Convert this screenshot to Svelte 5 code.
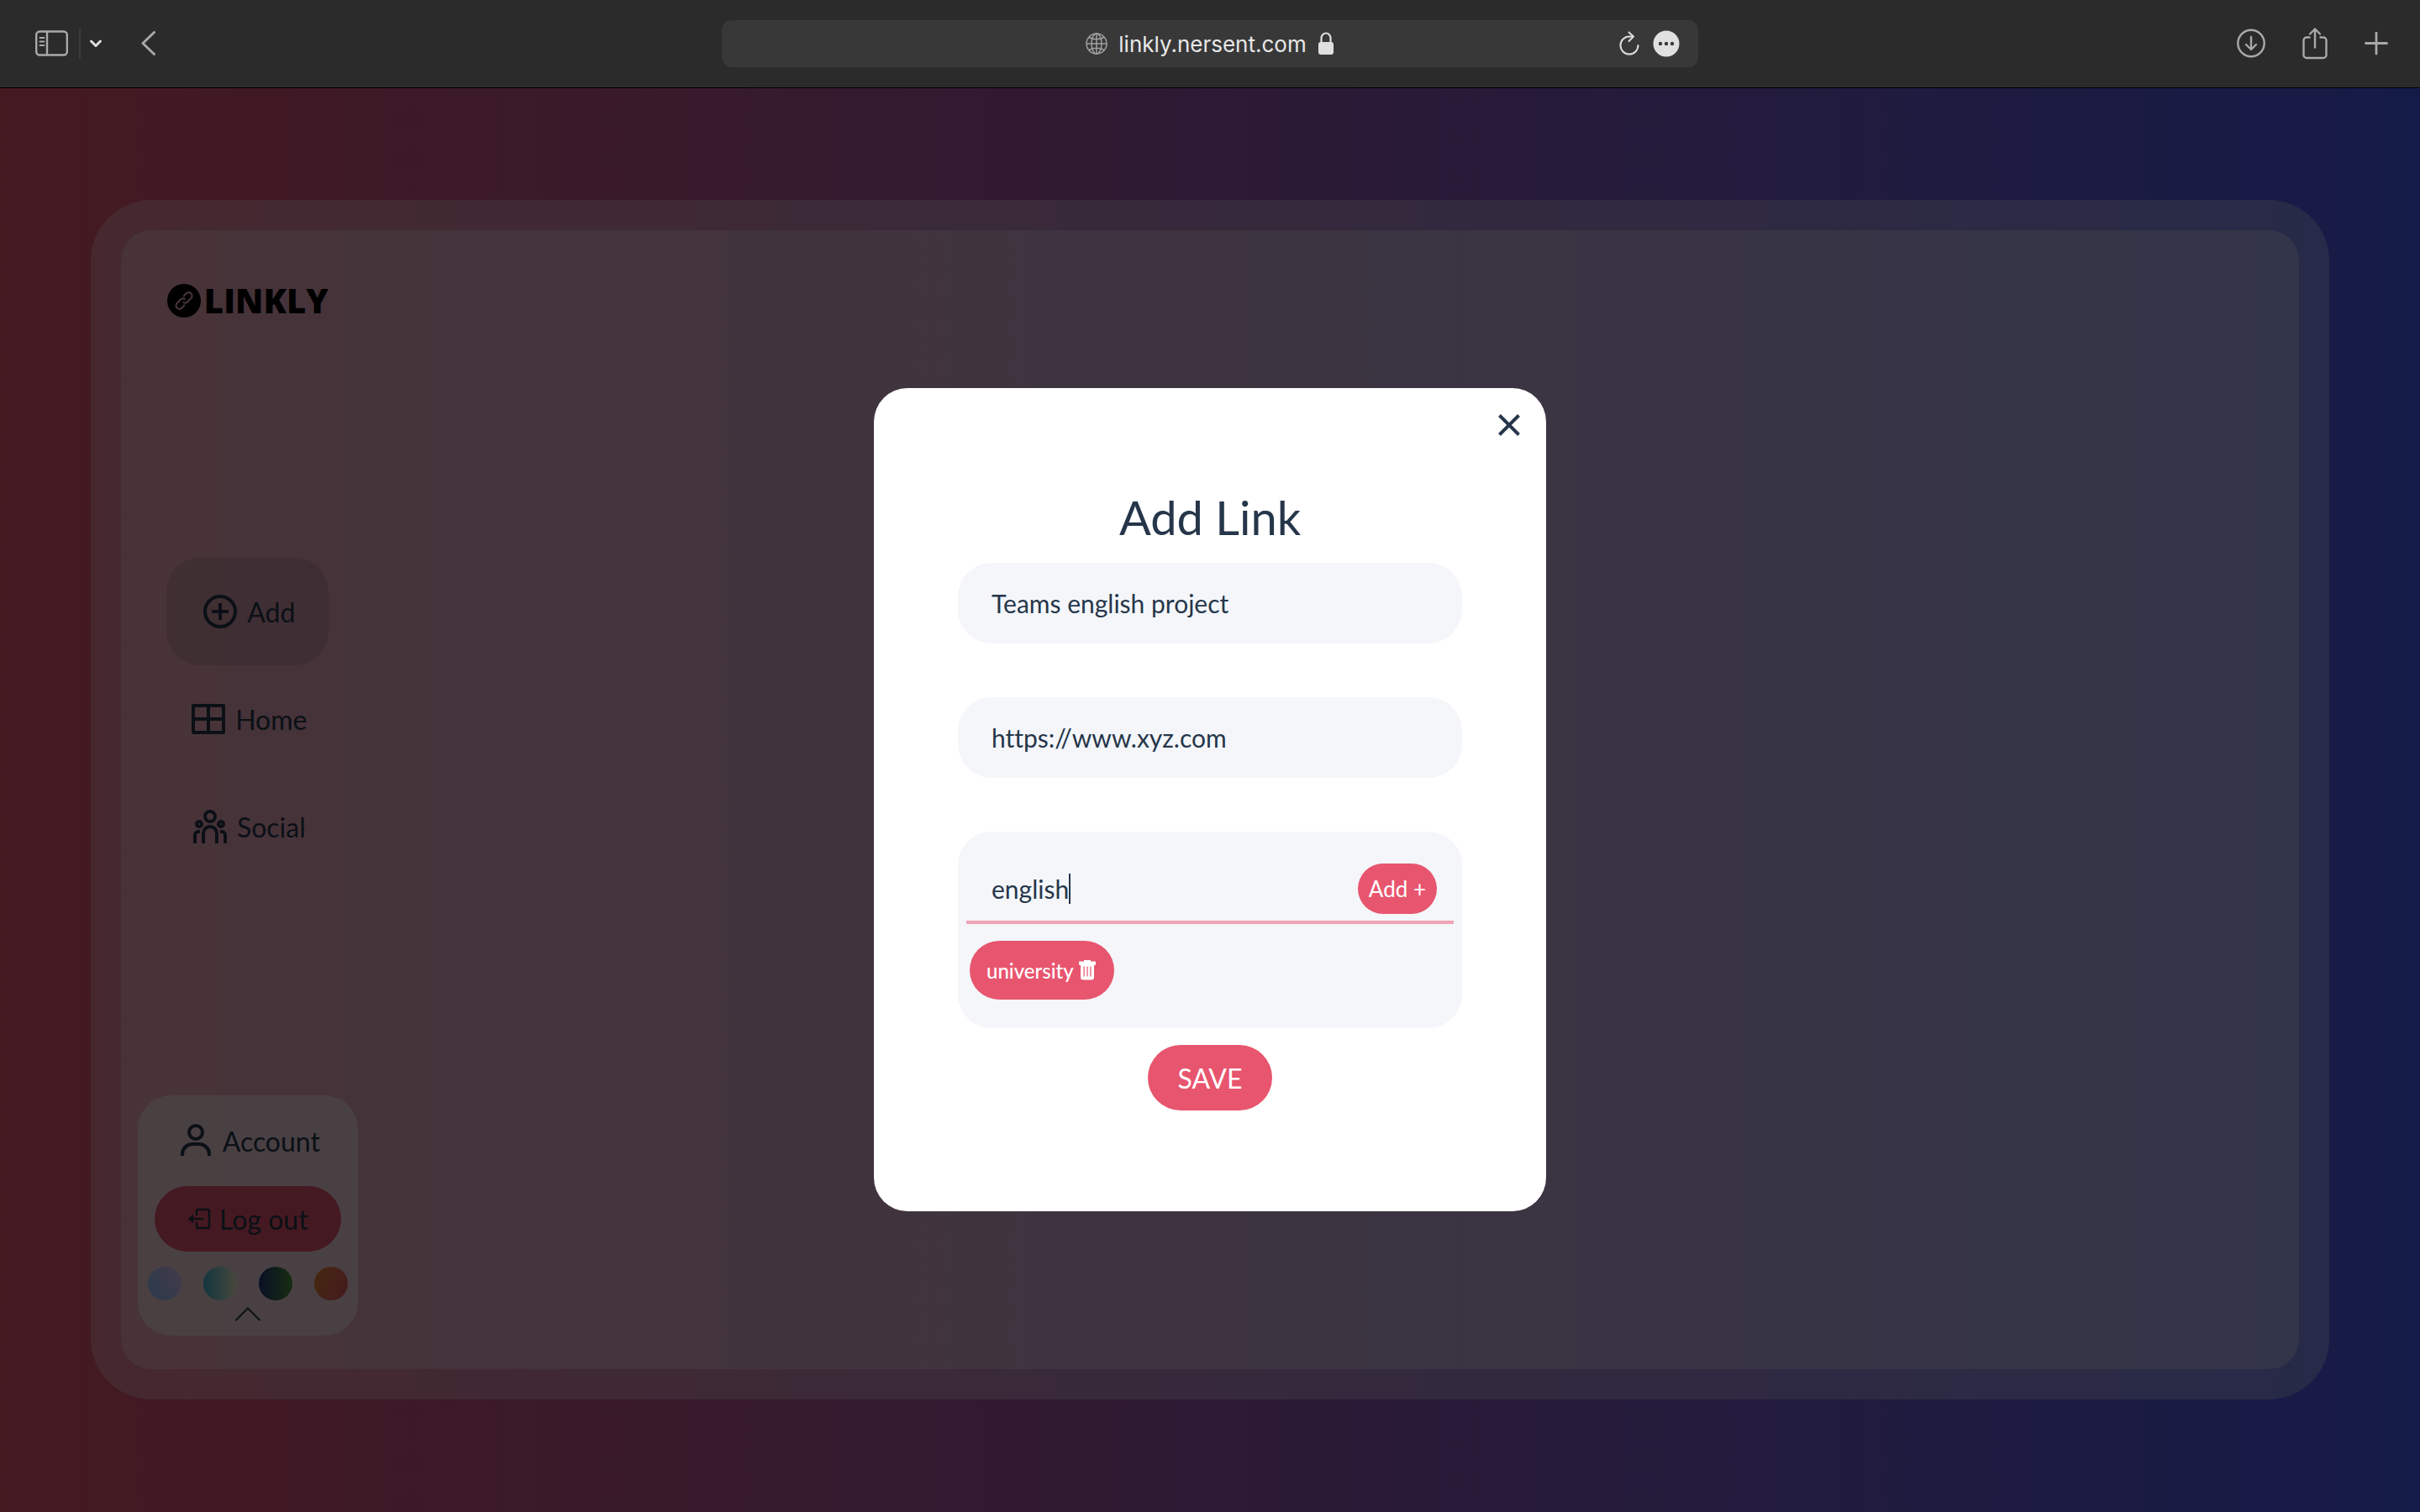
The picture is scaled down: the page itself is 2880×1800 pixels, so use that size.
<script>
  let title = $state('Teams english project');
  let url = $state('https://www.xyz.com');
  let tag = $state('english');
  let tags = $state(['university']);
  let address = $state('linkly.nersent.com');

  const themes = ['Sky', 'Lagoon', 'Forest', 'Sunset'];

  function addTag() {
    const name = tag.trim();
    if (name) tags.push(name);
    tag = '';
  }
</script>

<div class="browser">
  <header class="toolbar">
    <div class="group">
      <button class="icon-btn" aria-label="Show sidebar">
        <svg width="40" height="32" viewBox="0 0 40 32" fill="none" stroke="currentColor" stroke-width="2.4">
          <rect x="1.2" y="1.5" width="36.6" height="28" rx="4" />
          <path d="M14 1.500v28" />
          <path d="M5.500 9h5M5.500 13.500h5M5.500 18h5" stroke-width="1.800" stroke-linecap="round" />
        </svg>
      </button>
      <span class="divider"></span>
      <button class="icon-btn bright" aria-label="Tab groups">
        <svg width="16" height="12" viewBox="0 0 16 12" fill="none" stroke="currentColor" stroke-width="3" stroke-linecap="round" stroke-linejoin="round">
          <path d="M2.500 3l5.500 5.500L13.500 3" />
        </svg>
      </button>
      <button class="icon-btn back" aria-label="Back">
        <svg width="18" height="30" viewBox="0 0 18 30" fill="none" stroke="currentColor" stroke-width="3" stroke-linecap="round" stroke-linejoin="round">
          <path d="M15.500 1.500L2 14.500l13.500 13" />
        </svg>
      </button>
    </div>

    <div class="address">
      <div class="site">
        <svg width="26" height="26" viewBox="0 0 26 26" fill="none" stroke="#a0a0a0" stroke-width="1.500">
          <circle cx="13" cy="13" r="12" />
          <ellipse cx="13" cy="13" rx="6" ry="12" />
          <path d="M13 1v24M1 13h24M4 5.500c5 3 13 3 18 0M4 20.500c5-3 13-3 18 0" />
        </svg>
        <input aria-label="Address" bind:value={address} />
        <svg width="20" height="28" viewBox="0 0 20 28">
          <rect x="1" y="12" width="18" height="15" rx="3" fill="#e0e0e0" />
          <path d="M4.500 13V7.500a5.500 6 0 0 1 11 0V13" fill="none" stroke="#e0e0e0" stroke-width="2.200" />
        </svg>
      </div>
      <div class="tools">
        <button class="icon-btn bright" aria-label="Reload">
          <svg width="26" height="30" viewBox="0 0 26 30" fill="none" stroke="currentColor" stroke-width="2" stroke-linecap="round" stroke-linejoin="round">
            <path d="M23.500 17A10.500 10.500 0 1 1 13 6.500h4" />
            <path d="M12.500 1.500l5.500 5-5.500 5.500" />
          </svg>
        </button>
        <button class="icon-btn bright" aria-label="Page settings">
          <svg width="32" height="32" viewBox="0 0 32 32">
            <circle cx="16" cy="16" r="15.500" fill="#e0e0e0" />
            <g fill="#383838"><circle cx="9" cy="16" r="2.200" /><circle cx="16" cy="16" r="2.200" /><circle cx="23" cy="16" r="2.200" /></g>
          </svg>
        </button>
      </div>
    </div>

    <div class="group end">
      <button class="icon-btn" aria-label="Downloads">
        <svg width="34" height="38" viewBox="0 0 34 38" fill="none" stroke="currentColor" stroke-width="2.400" stroke-linecap="round" stroke-linejoin="round">
          <circle cx="17" cy="18.500" r="15.700" />
          <path d="M17 11V25.500M11 20l6 6 6-6" />
        </svg>
      </button>
      <button class="icon-btn" aria-label="Share">
        <svg width="30" height="38" viewBox="0 0 30 38" fill="none" stroke="currentColor" stroke-width="2.400" stroke-linecap="round" stroke-linejoin="round">
          <path d="M9.500 11.500H5A3.500 3.500 0 0 0 1.500 15v17.500A3.500 3.500 0 0 0 5 36h20a3.500 3.500 0 0 0 3.500-3.500V15a3.500 3.500 0 0 0-3.500-3.500h-4.500" stroke-linecap="butt" />
          <path d="M15 23.500V1.500M9 7.500l6-6 6 6" />
        </svg>
      </button>
      <button class="icon-btn" aria-label="New tab">
        <svg width="28" height="28" viewBox="0 0 28 28" fill="none" stroke="currentColor" stroke-width="2.800" stroke-linecap="round">
          <path d="M14 1v25M1.500 13.500h25" />
        </svg>
      </button>
    </div>
  </header>

  <main class="stage">
    <div class="frame">
      <div class="panel">
        <aside class="sidebar">
          <a class="logo" href="#home">
            <svg width="40" height="40" viewBox="0 0 40 40">
              <mask id="chain">
                <rect width="40" height="40" fill="#fff" />
                <g transform="rotate(-47 20 20)" fill="none" stroke="#000" stroke-width="2.200">
                  <path d="M17 24h-5a4 4 0 0 1 0-8h6a4 4 0 0 1 4 4" />
                  <path d="M23 16h5a4 4 0 0 1 0 8h-6a4 4 0 0 1-4-4" />
                </g>
              </mask>
              <circle cx="20" cy="20" r="20" mask="url(#chain)" />
            </svg>
            <span>LINKLY</span>
          </a>

          <nav>
            <a class="item active" href="#add">
              <svg width="48" height="48" viewBox="0 0 24 24" fill="none" stroke="currentColor" stroke-width="2">
                <circle cx="12" cy="12" r="9" />
                <path d="M12 7v10M7 12h10" />
              </svg>
              Add
            </a>
            <a class="item" href="#home">
              <svg width="48" height="48" viewBox="0 0 24 24" fill="none" stroke="currentColor" stroke-width="2" stroke-linejoin="round">
                <path d="M3 4h18v16H3zM12 4v16M3 12h18" />
              </svg>
              Home
            </a>
            <a class="item" href="#social">
              <svg width="48" height="48" viewBox="0 0 24 24" fill="none" stroke="currentColor" stroke-width="2">
                <circle cx="12" cy="6" r="3" />
                <circle cx="5.500" cy="10.500" r="1.500" />
                <circle cx="18.500" cy="10.500" r="1.500" />
                <path d="M8 22v-6a4 4 0 0 1 8 0v6M3 22v-5a2 2 0 0 1 2-2h1M21 22v-5a2 2 0 0 0-2-2h-1" />
              </svg>
              Social
            </a>
          </nav>

          <section class="account">
            <a class="profile" href="#account">
              <svg width="48" height="48" viewBox="0 0 24 24" fill="none" stroke="currentColor" stroke-width="2">
                <circle cx="12" cy="7" r="4" />
                <path d="M4 21v-1a6 6 0 0 1 6-6h4a6 6 0 0 1 6 6v1" />
              </svg>
              Account
            </a>
            <button class="logout">
              <svg width="30" height="30" viewBox="0 0 30 30" fill="none" stroke="currentColor" stroke-width="2.500">
                <path d="M11 11V5.500a1.500 1.500 0 0 1 1.500-1.500h12a1.500 1.500 0 0 1 1.500 1.500v19a1.500 1.500 0 0 1-1.500 1.500h-12a1.500 1.500 0 0 1-1.500-1.500V19M19 15H6" />
                <path d="M7 9.500v11L1 15z" fill="currentColor" stroke="none" />
              </svg>
              Log out
            </button>
            <div class="themes">
              {#each themes as name}
                <button class="theme {name.toLowerCase()}" aria-label="{name} theme"></button>
              {/each}
            </div>
            <button class="collapse" aria-label="Collapse">
              <svg width="32" height="18" viewBox="0 0 32 18" fill="none" stroke="currentColor" stroke-width="2" stroke-linecap="round">
                <path d="M2 15.500L16 1.500l14 14" />
              </svg>
            </button>
          </section>
        </aside>
      </div>
    </div>

    <div class="overlay">
      <form class="modal" onsubmit={(e) => e.preventDefault()}>
        <button type="button" class="close" aria-label="Close">
          <svg width="28" height="28" viewBox="0 0 28 28" fill="none" stroke="currentColor" stroke-width="4">
            <path d="M2.500 2.500l23 23M25.500 2.500l-23 23" />
          </svg>
        </button>
        <h1>Add Link</h1>
        <div class="fields">
          <input class="field" aria-label="Title" bind:value={title} />
          <input class="field" aria-label="Link" bind:value={url} />
          <div class="tags">
            <div class="entry">
              <input class="tag-input" aria-label="Tag" bind:value={tag} />
              <span class="caret"></span>
              <button type="button" class="add-tag" onclick={addTag}>Add +</button>
            </div>
            <div class="chips">
              {#each tags as name, i}
                <button type="button" class="chip" aria-label="Remove {name}" onclick={() => tags.splice(i, 1)}>
                  {name}
                  <svg width="20" height="24" viewBox="0 0 20 24" fill="currentColor">
                    <path d="M6 0h8v1.500h5a1 1 0 0 1 1 1V5a1 1 0 0 1-1 1H1a1 1 0 0 1-1-1V2.500a1 1 0 0 1 1-1h5z" />
                    <path fill-rule="evenodd" d="M2 5h16v15.500a3 3 0 0 1-3 3H5a3 3 0 0 1-3-3zM5.500 7.500v12h1.200v-12zM9.400 7.500v12h1.200v-12zM13.300 7.500v12h1.200v-12z" />
                  </svg>
                </button>
              {/each}
            </div>
          </div>
        </div>
        <button class="save">SAVE</button>
      </form>
    </div>
  </main>
</div>

<style>
  :global(body) {
    margin: 0;
  }
  .browser {
    display: flex;
    flex-direction: column;
    min-height: 100vh;
    font-family: Lato, sans-serif;
    font-size: 32px;
    font-variant-ligatures: none;
    color: #26364a;
  }
  button,
  input {
    margin: 0;
    padding: 0;
    border: 0;
    outline: 0;
    background: none;
    font: inherit;
    font-variant-ligatures: none;
    color: inherit;
  }
  button {
    cursor: pointer;
  }
  a {
    color: inherit;
    text-decoration: none;
  }
  svg {
    display: block;
    flex: none;
  }

  .toolbar {
    display: grid;
    grid-template-columns: 1fr minmax(0, 1162px) 1fr;
    align-items: center;
    height: 104px;
    border-bottom: 1px solid #000;
    background: #2b2b2b;
    color: #a9a9a9;
    font-family: Inter, sans-serif;
    font-size: 26px;
  }
  .group {
    display: flex;
    align-items: center;
    padding: 0 42px;
  }
  .group.end {
    justify-content: flex-end;
    gap: 44px;
    padding: 0 38px;
  }
  .bright {
    color: #dedede;
  }
  .divider {
    width: 2px;
    height: 36px;
    margin: 0 10px 0 12px;
    background: #3d3d3d;
  }
  .back {
    margin-left: 46px;
  }
  .address {
    display: grid;
    grid-template-columns: 1fr auto 1fr;
    align-items: center;
    height: 56px;
    border-radius: 12px;
    background: #383838;
  }
  .site {
    grid-column: 2;
    display: flex;
    align-items: center;
    gap: 13px;
  }
  .site input {
    field-sizing: content;
    color: #e8e8e8;
  }
  .tools {
    display: flex;
    align-items: center;
    justify-content: flex-end;
    gap: 15px;
    padding-right: 22px;
  }

  .stage {
    position: relative;
    flex: 1;
    display: flex;
    padding: 133px 108px 134px;
    background: linear-gradient(90deg, #e8556d, #475cf0);
  }
  .frame {
    flex: 1;
    display: flex;
    padding: 36px;
    border-radius: 72px;
    background: rgba(255, 255, 255, 0.3);
  }
  .panel {
    flex: 1;
    display: flex;
    padding: 40px 20px;
    border-radius: 36px;
    background: rgba(255, 255, 255, 0.3);
  }
  .sidebar {
    display: flex;
    flex-direction: column;
    align-items: center;
    justify-content: space-between;
  }
  .logo {
    display: flex;
    align-items: center;
    gap: 4px;
    height: 88px;
    padding-bottom: 6px;
    color: #000;
    font: 800 40px/54px "Open Sans", sans-serif;
  }
  nav {
    display: flex;
    flex-direction: column;
    align-items: center;
  }
  .item {
    display: flex;
    align-items: center;
    gap: 8px;
    height: 128px;
    padding: 0 40px;
    border-radius: 40px;
  }
  .item.active {
    background: rgba(0, 0, 0, 0.1);
  }
  .account {
    display: flex;
    flex-direction: column;
    align-items: center;
    padding: 30px 12px 16px;
    border-radius: 40px;
    background: rgba(255, 255, 255, 0.5);
  }
  .profile {
    display: flex;
    align-items: center;
    gap: 8px;
  }
  .logout {
    display: flex;
    align-items: center;
    gap: 8px;
    height: 78px;
    margin: 30px 8px 18px;
    padding: 0 39px;
    border-radius: 40px;
    background: #e8556e;
  }
  .themes {
    align-self: stretch;
    display: flex;
    justify-content: space-between;
  }
  .theme {
    width: 40px;
    height: 40px;
    border-radius: 50%;
  }
  .sky {
    background: linear-gradient(62deg, #8ec5fc, #e0c3fc);
  }
  .lagoon {
    background: linear-gradient(90deg, #43b5d0, #f0f2d0);
  }
  .forest {
    background: linear-gradient(90deg, #23307d, #4a9a3c);
  }
  .sunset {
    background: linear-gradient(120deg, #e88a30, #e8556e);
  }
  .collapse {
    margin-top: 8px;
  }

  .overlay {
    position: absolute;
    inset: -1px 0 0;
    display: grid;
    place-items: center;
    background: rgba(0, 0, 0, 0.7);
  }
  .modal {
    position: relative;
    box-sizing: border-box;
    display: flex;
    flex-direction: column;
    align-items: center;
    gap: 20px;
    width: 800px;
    padding: 120px 100px;
    border-radius: 40px;
    background: #fff;
  }
  .close {
    position: absolute;
    top: 30px;
    right: 30px;
  }
  h1 {
    margin: 0;
    font-size: 56px;
    line-height: 68px;
    font-weight: 400;
  }
  .fields {
    align-self: stretch;
    display: flex;
    flex-direction: column;
    gap: 64px;
    font-size: 30px;
  }
  .field {
    height: 96px;
    padding: 0 40px;
    border-radius: 40px;
    background: #f4f6fa;
  }
  .tags {
    padding: 30px 10px 34px;
    border-radius: 40px;
    background: #f4f6fa;
  }
  .entry {
    display: flex;
    align-items: center;
    height: 76px;
    padding: 0 20px 0 30px;
    border-bottom: 4px solid #f1a4b4;
  }
  .tag-input {
    field-sizing: content;
  }
  .caret {
    width: 2px;
    height: 36px;
    background: #26364a;
  }
  .add-tag {
    height: 60px;
    margin-left: auto;
    padding: 0 13px;
    border-radius: 30px;
    background: #e8556e;
    color: #fff;
    font-size: 26px;
  }
  .chips {
    display: flex;
    flex-wrap: wrap;
    gap: 8px;
    padding: 20px 4px 0;
  }
  .chip {
    display: flex;
    align-items: center;
    gap: 6px;
    height: 70px;
    padding: 0 22px 0 20px;
    border-radius: 36px;
    background: #e8556e;
    color: #fff;
    font-size: 24px;
    font-weight: 500;
  }
  .save {
    height: 78px;
    padding: 0 35px;
    border-radius: 40px;
    background: #e8556e;
    color: #fff;
  }
</style>
